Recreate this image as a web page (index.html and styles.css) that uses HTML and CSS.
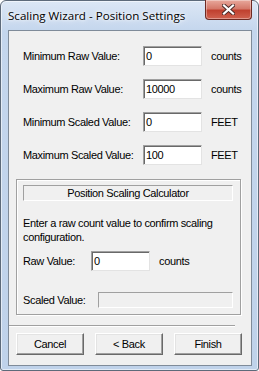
FILE: index.html
```html
<!DOCTYPE html>
<html lang="en">
<head>
  <meta charset="UTF-8">
  <title>Scaling Wizard - Position Settings</title>
  <link rel="stylesheet" href="styles.css">
</head>
<body>

<div class="window">
  <div class="titlebar">
    <span class="title">Scaling Wizard - Position Settings</span>
    <button class="close" aria-label="Close">
      <svg width="13" height="11" viewBox="0 0 13 11">
        <path d="M2 1.5 L11 9.5 M11 1.5 L2 9.5" stroke="#4a2a28" stroke-width="4" stroke-linecap="square"/>
        <path d="M2 1.5 L11 9.5 M11 1.5 L2 9.5" stroke="#ffffff" stroke-width="2.2" stroke-linecap="square"/>
      </svg>
    </button>
  </div>

  <div class="client">
    <div class="fields">
      <label>Minimum Raw Value:</label>
      <input type="text" value="0">
      <span class="unit">counts</span>

      <label>Maximum Raw Value:</label>
      <input type="text" value="10000">
      <span class="unit">counts</span>

      <label>Minimum Scaled Value:</label>
      <input type="text" value="0">
      <span class="unit">FEET</span>

      <label>Maximum Scaled Value:</label>
      <input type="text" value="100">
      <span class="unit">FEET</span>
    </div>

    <div class="group">
      <div class="group-head">Position Scaling Calculator</div>
      <p class="hint">Enter a raw count value to confirm scaling configuration.</p>
      <div class="calc-row">
        <label>Raw Value:</label>
        <input type="text" value="0">
        <span class="unit">counts</span>
      </div>
      <div class="calc-row result">
        <label>Scaled Value:</label>
        <div class="readout"></div>
      </div>
    </div>

    <div class="separator"></div>

    <div class="buttons">
      <button class="btn">Cancel</button>
      <button class="btn">&lt; Back</button>
      <button class="btn">Finish</button>
    </div>
  </div>
</div>

</body>
</html>
```

FILE: styles.css
```css
* {
  margin: 0;
  padding: 0;
  box-sizing: border-box;
}

html, body {
  height: 100%;
  background: #ffffff;
  overflow: hidden;
}

.window {
  width: 259px;
  height: 371px;
  display: flex;
  flex-direction: column;
  border: 1px solid #5d6a7a;
  border-radius: 6px 6px 3px 3px;
  background: linear-gradient(#dce7f5, #c4d6ed 30px, #bfd2ea);
  box-shadow: inset 0 0 0 1px rgba(255, 255, 255, 0.55);
}

.titlebar {
  height: 29px;
  display: flex;
  justify-content: space-between;
  align-items: flex-start;
  padding-left: 7px;
}

.title {
  font-family: "Open Sans", "Noto Sans", sans-serif;
  font-size: 11.6px;
  line-height: 14px;
  margin-top: 8px;
  color: #000;
  text-shadow: 0 0 6px #ffffff, 0 0 3px #ffffff;
}

.close {
  width: 47px;
  height: 20px;
  margin-top: -1px;
  margin-right: 6px;
  border: 1px solid #6e2a22;
  border-top: none;
  border-radius: 0 0 4px 4px;
  background: linear-gradient(#e8a89c, #d5796a 45%, #c0412f 55%, #d0624f);
  box-shadow: inset 0 0 0 1px rgba(255, 255, 255, 0.35);
  display: flex;
  justify-content: center;
  align-items: center;
}

.client {
  flex: 1;
  margin: 0 6px 4px 7px;
  border: 1px solid #7f8b99;
  background: #f0f0f0;
  font-family: "Liberation Sans", Arial, sans-serif;
  font-size: 11px;
  letter-spacing: -0.35px;
  color: #000;
  display: flex;
  flex-direction: column;
}

input {
  font-family: "Liberation Sans", Arial, sans-serif;
  font-size: 11px;
  letter-spacing: -0.35px;
  height: 20px;
  padding: 0 2px;
  background: #ffffff;
  border: 1px solid;
  border-color: #a0a0a0 #e3e3e3 #e3e3e3 #a0a0a0;
  box-shadow: inset 1px 1px 0 #696969;
  outline: none;
}

.fields {
  display: grid;
  grid-template-columns: 111px 59px auto;
  column-gap: 9px;
  row-gap: 13px;
  align-items: center;
  padding: 15px 0 0 14px;
}

.fields input {
  width: 59px;
}

.group {
  margin: 14px 10px 0 7px;
  height: 136px;
  border: 1px solid #a0a0a0;
  box-shadow: 1px 1px 0 #ffffff, inset 1px 1px 0 #ffffff;
  padding: 5px 7px 0 6px;
}

.group-head {
  height: 16px;
  line-height: 14px;
  text-align: center;
  border: 1px solid;
  border-color: #a0a0a0 #ffffff #ffffff #a0a0a0;
}

.hint {
  margin-top: 15px;
  line-height: 14px;
}

.calc-row {
  display: flex;
  align-items: center;
  margin-top: 7px;
}

.calc-row label {
  width: 68px;
}

.calc-row input {
  width: 59px;
}

.calc-row .unit {
  margin-left: 9px;
}

.result {
  margin-top: 21px;
}

.result label {
  width: 75px;
}

.readout {
  flex: 1;
  height: 16px;
  border: 1px solid;
  border-color: #a0a0a0 #ffffff #ffffff #a0a0a0;
}

.separator {
  margin: 10px 16px 0 0;
  border-top: 1px solid #a0a0a0;
  border-bottom: 1px solid #ffffff;
}

.buttons {
  display: flex;
  gap: 11px;
  padding: 6px 0 0 7px;
}

.btn {
  width: 68px;
  height: 22px;
  font-family: "Liberation Sans", Arial, sans-serif;
  font-size: 11px;
  letter-spacing: -0.35px;
  background: #f0f0f0;
  border: 1px solid;
  border-color: #ffffff #696969 #696969 #ffffff;
  box-shadow: inset -1px -1px 0 #a0a0a0, inset 1px 1px 0 #e3e3e3;
  color: #000;
}
```
